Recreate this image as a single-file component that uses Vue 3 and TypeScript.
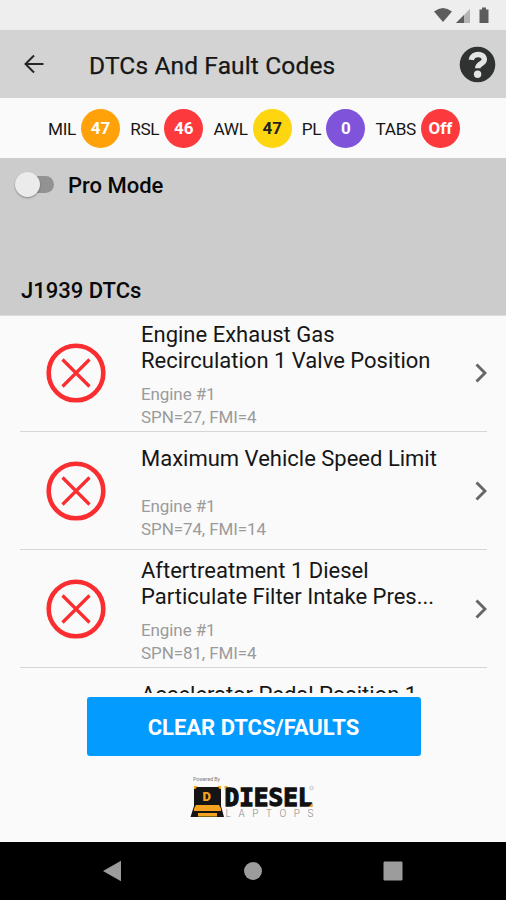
<script setup lang="ts">
interface Lamp {
  label: string
  value: string
  tone: string
}
interface Fault {
  title: string[]
  source: string
  code: string
}

const lamps: Lamp[] = [
  { label: 'MIL', value: '47', tone: 'orange' },
  { label: 'RSL', value: '46', tone: 'red' },
  { label: 'AWL', value: '47', tone: 'yellow' },
  { label: 'PL', value: '0', tone: 'purple' },
  { label: 'TABS', value: 'Off', tone: 'red' },
]

const faults: Fault[] = [
  { title: ['Engine Exhaust Gas', 'Recirculation 1 Valve Position'], source: 'Engine #1', code: 'SPN=27, FMI=4' },
  { title: ['Maximum Vehicle Speed Limit'], source: 'Engine #1', code: 'SPN=74, FMI=14' },
  { title: ['Aftertreatment 1 Diesel', 'Particulate Filter Intake Pres...'], source: 'Engine #1', code: 'SPN=81, FMI=4' },
]
const partial = 'Accelerator Pedal Position 1'
</script>

<template>
  <div class="screen">
    <div class="status-bar">
      <svg width="58" height="18" viewBox="0 0 58 18">
        <path d="M0 4.400Q9 -2.600 18 4.400L9 15Z" fill="#5c5c5c" />
        <path d="M36 2V16H22Z" fill="#b4b4b4" />
        <path d="M30 8V16H22Z" fill="#5c5c5c" />
        <path d="M48 .5h4v2h2.500v13.500h-9V2.500h2.500Z" fill="#5c5c5c" />
      </svg>
    </div>

    <header class="app-bar">
      <svg class="back" width="20" height="20" viewBox="0 0 20 20">
        <path d="M19.500 10H1.500M10 1.500L1.500 10L10 18.500" fill="none" stroke="#262626" stroke-width="2" />
      </svg>
      <h1>DTCs And Fault Codes</h1>
      <svg class="help" width="37" height="37" viewBox="0 0 37 37">
        <circle cx="18.500" cy="18.500" r="17.800" fill="#303232" />
        <path d="M12.300 13.800C13.300 6.700 25.300 6.700 25.300 13.600C25.300 18 18.700 17.200 18.700 22.300" fill="none" stroke="#e4e4e4" stroke-width="5.400" />
        <circle cx="18.600" cy="28.200" r="3.700" fill="#e4e4e4" />
      </svg>
    </header>

    <section class="lamps">
      <div v-for="lamp in lamps" :key="lamp.label" class="lamp">
        <span class="lamp-label">{{ lamp.label }}</span>
        <span class="lamp-value" :class="lamp.tone">{{ lamp.value }}</span>
      </div>
    </section>

    <section class="mode">
      <div class="mode-row">
        <span class="switch"><span class="thumb"></span></span>
        <span class="mode-label">Pro Mode</span>
      </div>
      <h2>J1939 DTCs</h2>
    </section>

    <main class="list">
      <article v-for="fault in faults" :key="fault.code" class="row">
        <svg class="fault-icon" width="60" height="60" viewBox="0 0 60 60">
          <circle cx="30" cy="30" r="27.300" fill="none" stroke="#fa2d30" stroke-width="4.600" />
          <path d="M16.500 16.500L43.500 43.500M43.500 16.500L16.500 43.500" stroke="#fa2d30" stroke-width="3.200" />
        </svg>
        <div class="info">
          <div class="title">
            <div v-for="line in fault.title" :key="line">{{ line }}</div>
          </div>
          <div class="sub">{{ fault.source }}</div>
          <div class="sub">{{ fault.code }}</div>
        </div>
        <svg class="chevron" width="12" height="20" viewBox="0 0 12 20">
          <path d="M1.500 1.500L10 10L1.500 18.500" fill="none" stroke="#666" stroke-width="2.900" />
        </svg>
      </article>
      <article class="next">{{ partial }}</article>
    </main>

    <footer class="footer">
      <button class="clear">CLEAR DTCS/FAULTS</button>
      <svg class="logo" width="126" height="46" viewBox="0 0 126 46">
        <text x="3" y="6" class="powered" textLength="27" lengthAdjust="spacingAndGlyphs">Powered By</text>
        <path d="M4 12H31V31L34 42H0.500L4 31Z" fill="#151515" />
        <path d="M4 11h3.500l-2 3H4zM31 11h-3.500l2 3H31z" fill="#f3a31f" />
        <path d="M6 30H29L31 33.500V36H4V33.500Z" fill="#f3a31f" />
        <path d="M8 38H27V41.500H8Z" fill="#f3a31f" />
        <text x="12.500" y="25.500" class="emblem">D</text>
        <text x="34.500" y="31" class="brand" textLength="88" lengthAdjust="spacingAndGlyphs">DIESEL</text>
        <path d="M34.500 11h3.500l-3.500 3.500zM122.500 28v4h-4z" fill="#f3a31f" />
        <circle cx="121.500" cy="13" r="1.700" fill="none" stroke="#aaa" stroke-width=".7" />
        <text x="35.500" y="42" class="laptops" textLength="88" lengthAdjust="spacing">LAPTOPS</text>
      </svg>
    </footer>

    <nav class="nav">
      <svg width="18" height="22" viewBox="0 0 18 22"><path d="M0 11L18 .8V21.200Z" fill="#9c9c9c" /></svg>
      <svg width="18" height="18" viewBox="0 0 18 18"><circle cx="9" cy="9" r="9" fill="#9c9c9c" /></svg>
      <svg width="20" height="20" viewBox="0 0 20 20"><rect x=".5" y=".5" width="19" height="19" rx="1.200" fill="#9c9c9c" /></svg>
    </nav>
  </div>
</template>

<style>
body {
  margin: 0;
}
</style>

<style scoped>
.screen {
  width: 506px;
  height: 900px;
  display: flex;
  flex-direction: column;
  overflow: hidden;
  background: #fafafa;
  color: #161616;
  font-family: Roboto, sans-serif;
}
.screen > * {
  box-sizing: border-box;
  flex-shrink: 0;
}
.status-bar {
  height: 30px;
  padding: 7px 14px 0 0;
  display: flex;
  justify-content: flex-end;
  background: #eee;
}
.app-bar {
  height: 68px;
  padding: 0 10px 0 24px;
  display: flex;
  align-items: center;
  background: #d3d3d3;
}
.app-bar h1 {
  margin: 3px 0 0 45px;
  flex: 1;
  font-size: 24.500px;
  line-height: 30px;
  font-weight: 400;
  letter-spacing: 0.140px;
  -webkit-text-stroke: 0.250px #161616;
}
.lamps {
  height: 60px;
  padding: 1px 46px 0 48px;
  display: flex;
  align-items: center;
  justify-content: space-between;
}
.lamp {
  display: flex;
  align-items: center;
  gap: 5px;
}
.lamp-label {
  font-size: 17.200px;
  line-height: 22px;
  letter-spacing: -0.300px;
}
.lamp-value {
  width: 39px;
  height: 39px;
  border-radius: 50%;
  font-size: 17px;
  line-height: 39px;
  font-weight: 700;
  text-align: center;
  color: #fff;
}
.orange { background: #ffa20a; }
.red { background: #fc393c; }
.yellow { background: #fdd60f; color: #222; }
.purple { background: #8053db; }
.mode {
  height: 158px;
  padding: 11px 0 0 15px;
  background: #ccc;
  border-bottom: 1px solid #ddd;
}
.mode-row {
  display: flex;
  align-items: center;
  gap: 14px;
  height: 32px;
}
.switch {
  width: 39px;
  height: 17px;
  margin-top: -2px;
  display: flex;
  align-items: center;
  border-radius: 9px;
  background: linear-gradient(90deg, transparent 12px, #929292 12px);
}
.thumb {
  width: 25px;
  height: 25px;
  border-radius: 50%;
  background: #ebebeb;
  box-shadow: 0 1px 2px rgba(0, 0, 0, 0.35);
}
.mode-label,
.mode h2 {
  font-size: 22px;
  line-height: 28px;
  font-weight: 500;
  color: #080808;
}
.mode-label {
  padding-top: 2px;
}
.mode h2 {
  margin: 76px 0 0 6px;
}
.list {
  height: 377px;
  padding: 0 19px 0 20px;
  overflow: hidden;
}
.row {
  box-sizing: border-box;
  height: 118px;
  padding: 0 0 0 26px;
  display: flex;
  align-items: center;
  border-bottom: 1px solid #d6d6d6;
}
.row:first-child {
  margin-top: -2px;
}
.info {
  margin: 5px 0 0 35px;
  flex: 1;
}
.title {
  min-height: 40px;
  margin-bottom: 9px;
}
.title,
.next {
  font-size: 22px;
  line-height: 26px;
  white-space: nowrap;
}
.next {
  padding: 14px 0 0 121px;
}
.sub {
  font-size: 17px;
  line-height: 23px;
  letter-spacing: -0.090px;
  color: #9b9b9b;
}
.footer {
  height: 149px;
  padding-top: 4px;
  display: flex;
  flex-direction: column;
  align-items: center;
}
.clear {
  width: 334px;
  height: 59px;
  margin: 0 0 0 1px;
  padding: 2px 0 0;
  border: 0;
  border-radius: 3px;
  background: #049bff;
  color: #fff;
  font: 700 22px/28px Roboto, sans-serif;
}
.logo {
  margin: 19px 0 0;
}
.powered {
  font: 5.500px Roboto, sans-serif;
  fill: #777;
}
.emblem {
  font: 900 13px Roboto, sans-serif;
  fill: #f3a31f;
}
.brand {
  font: 700 25.500px "DejaVu Sans Mono", monospace;
  fill: #111;
  stroke: #111;
  stroke-width: 1.300px;
}
.laptops {
  font: 300 10px Roboto, sans-serif;
  fill: #888;
}
.nav {
  height: 58px;
  padding: 0 103px;
  display: flex;
  align-items: center;
  justify-content: space-between;
  background: #000;
}
.nav svg:nth-child(2) {
  margin-left: 2px;
}
</style>
